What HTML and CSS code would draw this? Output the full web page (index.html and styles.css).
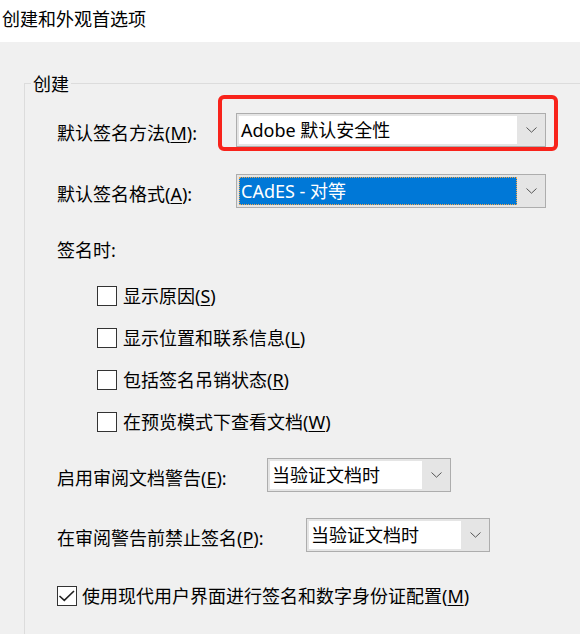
FILE: index.html
```html
<!DOCTYPE html>
<html lang="zh-CN">
<head>
<meta charset="utf-8">
<title>创建和外观首选项</title>
<link rel="stylesheet" href="styles.css">
</head>
<body>
<div class="titlebar">创建和外观首选项</div>
<main class="main">
  <fieldset class="group">
    <legend class="legend">创建</legend>
    <div class="content">
      <div class="row row-first">
        <span class="lbl lbl-top">默认签名方法(<u>M</u>):</span>
        <div class="combo combo-wide hl">
          <span class="field">Adobe 默认安全性</span>
          <span class="arrow"><svg width="11" height="6" viewBox="0 0 11 6"><polyline points="0.5,0.5 5.5,5.2 10.5,0.5" fill="none" stroke="#555" stroke-width="1"/></svg></span>
        </div>
      </div>
      <div class="row row-second">
        <span class="lbl lbl-top">默认签名格式(<u>A</u>):</span>
        <div class="combo combo-wide">
          <span class="field field-sel">CAdES - 对等</span>
          <span class="arrow"><svg width="11" height="6" viewBox="0 0 11 6"><polyline points="0.5,0.5 5.5,5.2 10.5,0.5" fill="none" stroke="#555" stroke-width="1"/></svg></span>
        </div>
      </div>
      <div class="text-line sign-head">签名时:</div>
      <div class="checks">
        <label class="check"><span class="box"></span><span>显示原因(<u>S</u>)</span></label>
        <label class="check"><span class="box"></span><span>显示位置和联系信息(<u>L</u>)</span></label>
        <label class="check"><span class="box"></span><span>包括签名吊销状态(<u>R</u>)</span></label>
        <label class="check"><span class="box"></span><span>在预览模式下查看文档(<u>W</u>)</span></label>
      </div>
      <div class="row row-warn">
        <span class="lbl lbl-warn">启用审阅文档警告(<u>E</u>):</span>
        <div class="combo combo-narrow">
          <span class="field">当验证文档时</span>
          <span class="arrow"><svg width="11" height="6" viewBox="0 0 11 6"><polyline points="0.5,0.5 5.5,5.2 10.5,0.5" fill="none" stroke="#555" stroke-width="1"/></svg></span>
        </div>
      </div>
      <div class="row row-block">
        <span class="lbl lbl-block">在审阅警告前禁止签名(<u>P</u>):</span>
        <div class="combo combo-narrow">
          <span class="field">当验证文档时</span>
          <span class="arrow"><svg width="11" height="6" viewBox="0 0 11 6"><polyline points="0.5,0.5 5.5,5.2 10.5,0.5" fill="none" stroke="#555" stroke-width="1"/></svg></span>
        </div>
      </div>
      <label class="check check-modern"><span class="box"><svg width="18" height="18" viewBox="0 0 18 18"><polyline points="1.5,9 6.3,13.3 16,4" fill="none" stroke="#222" stroke-width="1.6"/></svg></span><span>使用现代用户界面进行签名和数字身份证配置(<u>M</u>)</span></label>
    </div>
  </fieldset>
</main>
</body>
</html>
```

FILE: styles.css
```css
html, body {
  margin: 0;
  padding: 0;
  overflow: hidden;
}
body {
  background: #f0f0f0;
  color: #000;
  font-family: "Noto Sans", "Noto Sans CJK SC", sans-serif;
  font-size: 18px;
  line-height: 24px;
}
u {
  text-decoration: underline;
  text-underline-offset: 2px;
}
.titlebar {
  height: 42px;
  box-sizing: border-box;
  background: #fff;
  padding: 6px 0 0 2px;
  font-family: "Noto Sans CJK SC", sans-serif;
}
.main {
  padding: 29px 0 0 24px;
}
.group {
  margin: 0;
  padding: 0;
  border: 1px solid #dcdcdc;
  border-right: none;
  border-bottom: none;
  min-width: 0;
}
.legend {
  margin-left: 6px;
  padding: 0 2px;
  line-height: 24px;
  font-family: "Noto Sans CJK SC", sans-serif;
}
.content {
  padding: 0 0 60px 32px;
  display: flex;
  flex-direction: column;
  align-items: flex-start;
}
.row {
  display: flex;
  align-items: center;
}
.row-first { margin-top: 18px; }
.row-second { margin-top: 27px; }
.row-warn { margin-top: 24px; }
.row-block { margin-top: 26px; }
.lbl {
  flex: none;
  padding-top: 5px;
  white-space: nowrap;
}
.lbl-top { width: 179px; }
.lbl-warn { width: 210px; }
.lbl-block { width: 249px; }
.combo {
  height: 34px;
  box-sizing: border-box;
  border: 1px solid #adadad;
  background: #e5e5e5;
  padding: 2px 0 2px 2px;
  display: flex;
}
.combo-wide { width: 310px; }
.combo-narrow { width: 184px; }
.field {
  background: #fff;
  box-sizing: border-box;
  padding-left: 2px;
  line-height: 28px;
  white-space: nowrap;
  overflow: hidden;
}
.combo-wide .field { width: 278px; }
.combo-narrow .field { width: 152px; }
.field-sel {
  background: #0078d7;
  color: #fff;
  border: 1px dotted #f0a64a;
  padding-left: 1px;
  line-height: 26px;
}
.arrow {
  flex: 1;
  display: flex;
  align-items: center;
  justify-content: center;
  padding-left: 1px;
}
.hl {
  position: relative;
}
.hl::after {
  content: "";
  position: absolute;
  left: -19px;
  top: -19px;
  right: -13px;
  bottom: -5px;
  border: 4px solid #f8231b;
  border-radius: 6px;
}
.sign-head {
  margin-top: 30px;
}
.checks {
  display: flex;
  flex-direction: column;
  gap: 18px;
  margin-top: 22px;
  padding-left: 40px;
}
.check {
  display: flex;
  align-items: center;
  gap: 6px;
  white-space: nowrap;
}
.box {
  flex: none;
  width: 20px;
  height: 20px;
  box-sizing: border-box;
  border: 1px solid #333;
  background: #fff;
  display: flex;
  align-items: center;
  justify-content: center;
}
.check-modern {
  margin-top: 32px;
  gap: 5px;
}
```
